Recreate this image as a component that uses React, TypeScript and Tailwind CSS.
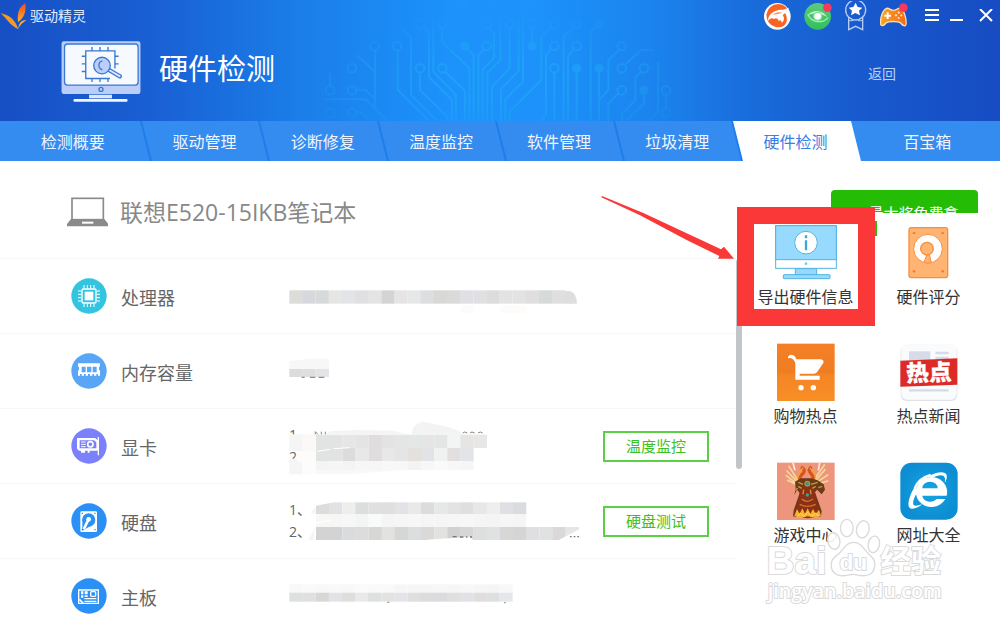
import React, { useState } from "react";
import type { ReactNode } from "react";

const tabs = ["检测概要", "驱动管理", "诊断修复", "温度监控", "软件管理", "垃圾清理", "硬件检测", "百宝箱"];

// traces and nodes of the circuit board behind the header
const traces = [
  "M293 150V270L388 363", "M305 85L333 112V285L412 363", "M370 80L387 98V232L456 300V363", "M400 45V215L468 285V363",
  "M360 218V270L442 350V363", "M426 85V125L508 205V363", "M435 215L495 272V363", "M500 145L521 165V363",
  "M555 148L535 165V363", "M570 85L582 100V175L548 208V363", "M560 5L601 45V180L562 218V363", "M629 85V205L576 260V363",
  "M629 15L656 40V212L603 268V363", "M669 0V245L616 298V363", "M696 85V130", "M752 82L724 110V240L629 335V363",
  "M752 148L738 165V345L724 363", "M763 218V363", "M820 82L791 110V363", "M820 150L804 168V363", "M830 215V363",
  "M890 80L872 95V363", "M897 215V363", "M957 150L925 180V270L900 298", "M975 195L1022 150H1060", "M955 280L925 310V363",
  "M1024 215L1006 232V300L965 342V363", "M1032 280V310L978 363", "M1074 185V335L1048 363", "M1098 285V325",
  "M225 150V320", "M170 165L225 215", "M172 271H198L225 298", "M70 298H198L262 363", "M170 338H185L210 363", "M90 220V258",
];
const rings = [
  [360, 72], [427, 72], [560, 72], [629, 72], [696, 72], [763, 72], [830, 72], [291, 138], [560, 138], [763, 138], [830, 138],
  [965, 138], [360, 205], [427, 205], [763, 205], [965, 205], [1032, 205], [156, 205], [156, 271], [965, 271], [1098, 271],
  [90, 271], [90, 338], [156, 338], [1098, 338], [224, 138], [629, 6], [696, 6], [560, 6],
];
const dots = [[494, 138], [696, 138], [830, 205], [897, 205], [1032, 271], [494, 4], [897, 72]];

function Circuit() {
  return (
    <svg className="absolute bottom-0 left-1/2 h-[121px] w-[400px] -translate-x-1/2" viewBox="0 0 1200 363" aria-hidden="true">
      <defs>
        <radialGradient id="fade" cx="0.5" cy="0.65" r="0.55">
          <stop offset="0.3" stopColor="#fff" />
          <stop offset="1" stopColor="#fff" stopOpacity="0.15" />
        </radialGradient>
        <mask id="fadeMask">
          <rect width="1200" height="363" fill="url(#fade)" />
        </mask>
      </defs>
      <g mask="url(#fadeMask)" stroke="#1fabf7" strokeWidth="6" fill="none" opacity="0.6">
        {traces.map((d) => <path key={d} d={d} />)}
        {rings.map(([x, y]) => <circle key={`${x}-${y}`} cx={x} cy={y} r="13" />)}
        {dots.map(([x, y]) => <circle key={`${x}-${y}`} cx={x} cy={y} r="11" fill="#1fabf7" />)}
      </g>
    </svg>
  );
}

function Logo() {
  return (
    <svg className="h-7 w-7" viewBox="0 8 84 84" aria-hidden="true">
      <defs>
        <linearGradient id="leaf" x1="0" y1="0" x2="0" y2="1">
          <stop offset="0" stopColor="#f04a20" />
          <stop offset="1" stopColor="#fbb32a" />
        </linearGradient>
      </defs>
      <path d="M76 12C60 20 50 40 54 68C72 58 80 34 76 12Z" fill="url(#leaf)" />
      <path d="M2 42C26 46 46 60 55 90C32 80 20 58 2 42Z" fill="#f39a2a" />
      <path d="M80 63C66 62 56 68 55 90C60 76 68 70 80 63Z" fill="#fbb32a" />
    </svg>
  );
}

function MonitorIcon() {
  return (
    <svg className="h-[61px] w-20" viewBox="183 122 240 184" fill="none" aria-hidden="true">
      <rect x="184" y="123" width="238" height="159" rx="7" fill="#bacef7" />
      <rect x="193" y="131" width="222" height="124" rx="9" fill="#f6faff" stroke="#3b78d2" strokeWidth="4" />
      <g stroke="#3b78d2" strokeWidth="4">
        <path d="M345 205V152H257V235H330" />
        <path d="M276 152V140M300 152V140M324 152V140M276 235V246M300 235V246M324 235V246M257 168H245M257 191H245M257 214H245M345 168H356M345 191H356" />
        <path d="M328 210L360 229" stroke="#3b78d2" strokeWidth="13" strokeLinecap="round" />
        <path d="M330 211L359 228" stroke="#dbe7fc" strokeWidth="6" strokeLinecap="round" />
        <circle cx="306" cy="196" r="25" fill="#bacef7" />
        <path d="M307 182A14 14 0 0 0 307 209" />
        <circle cx="303" cy="268" r="6" />
      </g>
      <rect x="267" y="284" width="69" height="11" fill="#dfe8fb" />
      <rect x="220" y="297" width="163" height="8" rx="3" fill="#f2f6ff" />
    </svg>
  );
}

function FoxIcon() {
  return (
    <svg className="h-[27px] w-[27px]" viewBox="72 8 81 81" aria-hidden="true">
      <circle cx="112" cy="48" r="40" fill="#fff" />
      <path d="M138 20A35 35 0 1 0 132 76C142 68 143 54 137 42C134 38 138 32 142 28Z" fill="#fb6325" />
      <path d="M84 62C84 48 92 38 106 32C120 26 134 30 146 22C144 36 134 38 128 44C136 54 130 66 124 68C126 60 120 58 116 62C114 54 108 52 102 56C96 52 90 54 84 62Z" fill="#fff" />
      <path d="M98 44C106 36 116 36 126 36C118 42 108 42 98 44Z" fill="#fb8a4c" />
      <path d="M120 64C116 70 106 72 98 70C106 80 124 80 132 70Z" fill="#fb6325" />
    </svg>
  );
}

function EyeIcon() {
  return (
    <svg className="h-[27px] w-7" viewBox="194 8 84 81" aria-hidden="true">
      <defs>
        <linearGradient id="eye" x1="0" y1="0" x2="0" y2="1">
          <stop offset="0" stopColor="#5bcb7c" />
          <stop offset="1" stopColor="#31c05a" />
        </linearGradient>
      </defs>
      <circle cx="235" cy="48" r="40" fill="url(#eye)" />
      <path d="M205 44C222 26 250 28 264 50C246 38 224 36 205 44Z" fill="#c9f4d0" />
      <path d="M205 42C216 66 246 72 266 52" stroke="#a8eab5" strokeWidth="4" fill="none" />
      <circle cx="235" cy="48" r="14" fill="#7fdf9a" />
      <circle cx="235" cy="48" r="10" fill="#fff" />
      <circle cx="264" cy="22" r="13" fill="#f8395c" />
    </svg>
  );
}

function BadgeIcon() {
  return (
    <svg className="h-[30px] w-[22px]" viewBox="319 0 66 90" fill="none" aria-hidden="true">
      <path d="M330 46V86L351 76L372 86V46" stroke="#b4cdf6" strokeWidth="4" />
      <path d="M330 59H344M358 59H372" stroke="#b4cdf6" strokeWidth="3" />
      <circle cx="351" cy="27" r="30" fill="#1b5bcb" stroke="#b4cdf6" strokeWidth="4" />
      <path d="M351 5L357 18L371 20L361 29L364 43L350 36L337 43L340 29L330 20L344 18Z" fill="#fff" />
    </svg>
  );
}

function GamepadIcon() {
  return (
    <svg className="h-[27px] w-7" viewBox="422 4 84 81" aria-hidden="true">
      <defs>
        <linearGradient id="pad" x1="0" y1="0" x2="1" y2="0">
          <stop offset="0" stopColor="#fba51d" />
          <stop offset="1" stopColor="#f26a1c" />
        </linearGradient>
      </defs>
      <path d="M442 20C450 18 452 26 462 26C472 26 474 18 484 20C494 24 502 52 500 68C498 76 490 72 484 64C476 58 448 58 440 64C434 72 424 76 424 66C422 50 430 24 442 20Z" fill="url(#pad)" stroke="#f8dfb9" strokeWidth="4" />
      <path d="M445 32V52M435 42H455" stroke="#fff" strokeWidth="6" />
      <path d="M478 29l4 4-4 4-4-4zM478 45l4 4-4 4-4-4zM470 37l4 4-4 4-4-4zM486 37l4 4-4 4-4-4z" fill="#ffe2c4" />
      <circle cx="492" cy="18" r="13" fill="#f8395c" />
    </svg>
  );
}

function Round({ color, children }: { color: string; children: ReactNode }) {
  return (
    <svg className="h-9 w-9 shrink-0" viewBox="-54 -54 108 108" fill="none" aria-hidden="true">
      <circle r="53" fill={color} />
      {children}
    </svg>
  );
}

const cpuIcon = (
  <Round color="#33c5e0">
    <rect x="-21" y="-21" width="42" height="42" rx="4" stroke="#fff" strokeWidth="4" />
    <rect x="-13" y="-13" width="26" height="26" fill="#fff" />
    <path d="M-15-23V-33M-5-23V-33M5-23V-33M15-23V-33M-15 23V33M-5 23V33M5 23V33M15 23V33M-23-15H-33M-23-5H-33M-23 5H-33M-23 15H-33M23-15H33M23-5H33M23 5H33M23 15H33" stroke="#fff" strokeWidth="3" />
  </Round>
);
const memoryIcon = (
  <Round color="#5aa6f6">
    <path d="M-33-23H33V-14L30-11V-2H33V14H27V9H22V14H15V9H10V14H3V9H-3V14H-10V9H-15V14H-22V9H-27V14H-33V-2H-30V-11L-33-14Z" fill="#fff" />
    <path d="M-22-13H-10V4H-22ZM-6-13H7V4H-6ZM11-13H23V4H11Z" fill="#5aa6f6" />
  </Round>
);
const gpuIcon = (
  <Round color="#7b80fb">
    <path d="M-36-24H18L26-18V-27H30V28H26V14H2V20H-4V14H-12V20H-24V14H-30L-36 8Z" fill="#fff" />
    <path d="M-28-17H15L22-11V7H-28Z" fill="#7b80fb" />
    <circle cx="4" cy="-5" r="8" stroke="#fff" strokeWidth="5" />
    <path d="M-24-12H-10M-24-5H-10M-24 2H-10" stroke="#fff" strokeWidth="3" />
  </Round>
);
const diskIcon = (
  <Round color="#2b90f6">
    <rect x="-26" y="-29" width="50" height="62" rx="4" fill="#fff" />
    <circle cx="-1" cy="-3" r="20" fill="#2b90f6" />
    <circle cx="-1" cy="-5" r="7" fill="#fff" />
    <path d="M-20 5V29L6 14Z" fill="#2b90f6" />
    <path d="M-3-2L-14 21" stroke="#fff" strokeWidth="8" strokeLinecap="round" />
    <path d="M-22-25h4v4h-4zM16-25h4v4h-4zM16 24h4v4h-4zM-22 24h4v4h-4z" fill="#2b90f6" />
  </Round>
);
const boardIcon = (
  <Round color="#2b90f6">
    <path d="M-31-18H28V22H-31Z" stroke="#fff" strokeWidth="4" />
    <path d="M-24-14h7v9h-7zM-13-14h9v9h-9zM-24-2h7v7h-7zM-13-2h9v5h-9z" fill="#fff" />
    <rect x="5" y="-13" width="15" height="14" rx="3" stroke="#fff" strokeWidth="4" />
    <path d="M-14 8H22M-14 16H22" stroke="#fff" strokeWidth="4" />
    <path d="M-29 10L-18 21" stroke="#fff" strokeWidth="5" />
  </Round>
);

// greyed out mosaic, each strip is a line of 13px cells
type Strip = { x: number; y: number; h: number; cells: string[] };

function Mosaic({ top, strips, children }: { top: number; strips: Strip[]; children?: ReactNode }) {
  return (
    <svg className="absolute left-0 top-0 h-[75px] w-[310px]" viewBox={`57 ${top} 930 225`} aria-hidden="true">
      {strips.map((s) =>
        s.cells.map((c, i) => (
          <rect key={`${s.y}-${i}`} x={s.x + Math.round(i * 39.4)} y={s.y} width="40" height={s.h} fill={c} />
        ))
      )}
      {children}
    </svg>
  );
}

const cpuStrips: Strip[] = [
  { x: 58, y: 58, h: 40, cells: ["#dcdcd8", "#d6d8de", "#d7dada", "#e6e6e4", "#e2e4e8", "#e0e0e2", "#e4e4e4", "#d4d4d4", "#e6e5e4", "#e6e8e8", "#dcdee0", "#d8d8d7", "#dadadb", "#e0e0e4", "#e0dfe1", "#dcdcdc", "#e3e3e3", "#e3e3e3", "#dfe0de", "#d7dada", "#dfdfe0"] },
  { x: 572, y: 104, h: 22, cells: ["#fdfcfb"] },
  { x: 690, y: 104, h: 22, cells: ["#fdfcfb", "#fdfcfb"] },
];
const memoryStrips: Strip[] = [
  { x: 58, y: 294, h: 24, cells: ["#dcdcdc", "#dedede", "#e2e4e8"] },
];
const gpuStrips: Strip[] = [
  { x: 58, y: 490, h: 50, cells: ["#f5f5f5", "#fbf9f8"] },
  { x: 138, y: 491, h: 40, cells: ["#e2e4e4", "#e2e3e3", "#e6e6e6", "#e4e4e4", "#dfddde", "#e3e3e3", "#e4e5e5", "#e3e7e6", "#e5e5e5", "#e4e5e5", "#f2f5f4", "#e6e5e3", "#e7e7e7"] },
  { x: 138, y: 531, h: 39, cells: ["#e2e4e4", "#e2e4e4", "#dcdcdd", "#e8e8e8", "#dfddde", "#e8e8e8", "#e4e5e5", "#e3e0dd", "#e2e3e7", "#eff2f1", "#e2dfde", "#e3e4e7"] },
  { x: 58, y: 563, h: 47, cells: ["#f5f5f5", "#fcfcfc"] },
  { x: 138, y: 570, h: 27, cells: ["#f3f4f4", "#f5f6f6", "#f4f4f4", "#f7f7f7", "#f6f6f6", "#f8f8f8", "#f6f7f7", "#f4f3f2", "#f7f7f8", "#f9fafa", "#f7f7f7", "#f6f6f7"] },
];
const diskStrips: Strip[] = [
  { x: 138, y: 64, h: 35, cells: ["#dddbdb", "#e0e2e6", "#eeeeec", "#dcdedd", "#e0e0e1", "#dedfde", "#e2e3e6", "#e9e9e9", "#dcdcdb", "#e5e8e7", "#e3e3e4", "#dedfdf", "#e7e7e7", "#efeeec", "#dee0e3", "#dadbdf"] },
  { x: 138, y: 99, h: 39, cells: ["#f7f7f6", "#f6f6f5", "#f6f7f6", "#f3f4f4", "#f9fbfa", "#f5f5f5", "#f6f6f6", "#f7f7f8", "#f5f5f5", "#f5f5f5", "#f6f6f7", "#f7f7f7", "#f5f5f5", "#f4f4f4", "#f6f6f6", "#f5f5f5"] },
  { x: 138, y: 138, h: 39, cells: ["#d3d3d3", "#d3d3d3", "#dadbdd", "#dcdcdc", "#d7d7d6", "#e2e2e1", "#d4d7d6", "#dcdddf", "#dad9d8", "#e2e2e0", "#d2d1d1", "#d6d6d8", "#dddfdf", "#e0e1e2", "#d8d7d6", "#d6d5d5", "#dfdfe2", "#e0e1e1", "#dbd9d8", "#e4e6e8"] },
];
const boardStrips: Strip[] = [
  { x: 58, y: 310, h: 25, cells: ["#f8f8f8", "#f9f9f9", "#f8f8f8", "#f9f9f9", "#f8f8f8", "#fafafa", "#f9f9f9", "#f9f9f9", "#f5f6f6", "#f6f6f6", "#f6f6f6", "#f7f7f7", "#f5f6f6", "#f8f8f8", "#f6f6f7", "#f4f6f6", "#f8f8f8"] },
  { x: 58, y: 335, h: 27, cells: ["#dedfdf", "#dfe1e0", "#d9d7d6", "#e2e3e6", "#dfdedc", "#e8eae9", "#dfe1e1", "#e5e3e1", "#e2e4e7", "#dfdfdf", "#dddcdb", "#dadbdf", "#e0dfdf", "#e0e2e5", "#dfdedd", "#dedfe0", "#e5e7ea"] },
];

type Row = { name: string; icon: ReactNode; lines?: string[]; action?: string; mosaic: ReactNode };

const rows: Row[] = [
  {
    name: "处理器",
    icon: cpuIcon,
    mosaic: (
      <Mosaic top={-36} strips={cpuStrips}>
        <path d="M885 60H900Q920 66 921 98H885Z" fill="#dedede" />
      </Mosaic>
    ),
  },
  {
    name: "内存容量",
    icon: memoryIcon,
    mosaic: (
      <Mosaic top={189} strips={memoryStrips}>
        <path d="M58 270L120 263H177V294H58Z" fill="#f7f7f7" />
        <path d="M95 319H104M120 319H136M146 319H163" stroke="#8d8d8d" strokeWidth="4" />
      </Mosaic>
    ),
  },
  {
    name: "显卡",
    icon: gpuIcon,
    lines: ["1、", "2、"],
    action: "温度监控",
    mosaic: (
      <Mosaic top={414} strips={gpuStrips}>
        <path d="M82 540H137V572H82Z" fill="#fdfcfb" />
        <path d="M180 481L260 477L370 479L415 491H165Z" fill="#f4f4f4" />
        <path d="M424 491Q430 455 460 452L535 468L572 482V491Z" fill="#f3f3f3" />
        <path d="M138 597H400L240 609H138Z" fill="#f8f8f8" />
        <path d="M136 490V482L144 490M154 482V490M166 482V490M578 486L584 483L592 486M600 486L606 483L614 486M624 486L631 483L638 486" stroke="#888" strokeWidth="3" fill="none" />
        <path d="M142 541L180 535M190 533L240 530" stroke="#fff" strokeWidth="3" />
      </Mosaic>
    ),
  },
  {
    name: "硬盘",
    icon: diskIcon,
    lines: ["1、", "2、"],
    action: "硬盘测试",
    mosaic: (
      <Mosaic top={9} strips={diskStrips}>
        <path d="M136 98L122 97L136 76ZM130 177H115L136 140Z" fill="#f4f4f4" />
        <path d="M138 62H200L138 74Z" fill="#fff" />
        <path d="M470 179V176L600 167L612 179ZM862 179L928 145V179Z" fill="#fff" />
        <path d="M548 167H560M570 168H580M588 168H592M600 168H606M900 167H905M911 167H916M922 167H927" stroke="#777" strokeWidth="4" />
        <path d="M138 126Q160 122 182 119" stroke="#fff" strokeWidth="4" fill="none" />
      </Mosaic>
    ),
  },
  {
    name: "主板",
    icon: boardIcon,
    mosaic: (
      <Mosaic top={234} strips={boardStrips}>
        <path d="M352 364H358M702 365H707" stroke="#999" strokeWidth="4" />
      </Mosaic>
    ),
  },
];

const exportIcon = (
  <svg className="h-14 w-[62px]" viewBox="135 132 186 168" fill="none" aria-hidden="true">
    <path d="M196 266H260V285H196Z" fill="#97d8fd" stroke="#52b2e3" strokeWidth="3" />
    <rect x="137" y="137" width="182" height="128" fill="#fff" stroke="#52b2e3" strokeWidth="3" />
    <path d="M137 137H319V239H137Z" fill="#97dafe" stroke="#52b2e3" strokeWidth="3" />
    <rect x="160" y="284" width="140" height="12" rx="2" fill="#97d8fd" stroke="#52b2e3" strokeWidth="3" />
    <circle cx="228" cy="188" r="34" fill="#fff" stroke="#52b2e3" strokeWidth="3" />
    <path d="M228 166V175M228 181V211" stroke="#3ba5dc" strokeWidth="7" />
    <circle cx="228" cy="251" r="4" fill="#7cc6ed" />
  </svg>
);
const scoreIcon = (
  <svg className="h-14 w-[57px]" viewBox="512 132 171 168" fill="none" aria-hidden="true">
    <rect x="539" y="143" width="116" height="150" rx="7" fill="#ffb474" stroke="#fb8d37" strokeWidth="4" />
    <circle cx="596" cy="206" r="43" fill="#fff" stroke="#fb8d37" strokeWidth="3" />
    <path d="M594 222L584 246Q595 252 606 248L600 222Z" fill="#ffb474" stroke="#fb8d37" strokeWidth="3" />
    <circle cx="593" cy="206" r="19" fill="#ffb474" stroke="#fb8d37" strokeWidth="4" />
    <g fill="#fb7c24">
      <circle cx="554" cy="159" r="4" />
      <circle cx="640" cy="159" r="4" />
      <circle cx="554" cy="274" r="4" />
      <circle cx="640" cy="274" r="4" />
    </g>
  </svg>
);
const cartIcon = (
  <svg className="h-[58px] w-[58px]" viewBox="112 38 174 174" aria-hidden="true">
    <defs>
      <linearGradient id="cart" x1="0" y1="0" x2="0" y2="1">
        <stop offset="0" stopColor="#f47f27" />
        <stop offset="0.5" stopColor="#f07d22" />
        <stop offset="0.55" stopColor="#f48524" />
        <stop offset="1" stopColor="#f88f26" />
      </linearGradient>
    </defs>
    <rect x="112" y="40" width="173" height="172" fill="url(#cart)" />
    <path d="M145 80Q148 72 156 73Q166 74 170 87H243Q254 89 251 98L232 126Q229 130 222 130H180V136H240V148H167V98Q160 80 145 84Z" fill="#fff" />
    <circle cx="184" cy="172" r="8" fill="#fff" />
    <circle cx="221" cy="172" r="8" fill="#fff" />
  </svg>
);
const newsIcon = (
  <svg className="h-[58px] w-[58px]" viewBox="480 38 174 174" aria-hidden="true">
    <rect x="482" y="44" width="170" height="168" rx="18" fill="#dfe2e8" />
    <rect x="484" y="40" width="166" height="168" rx="18" fill="#fafbfd" />
    <path d="M507 63H571V90H507Z" fill="#d5dbe7" />
    <path d="M586 68H626M586 83H626M507 180H626" stroke="#d5dbe7" strokeWidth="7" />
    <path d="M481 91L652 84V163L481 169Z" fill="#dc2a27" />
    <text x="567" y="151" textAnchor="middle" fontSize="68" fontWeight="900" fill="#fff" stroke="#fff" strokeWidth="1" fontFamily="'Noto Sans CJK SC', sans-serif" transform="rotate(-2 567 128)">热点</text>
  </svg>
);
const gameIcon = (
  <svg className="h-[58px] w-[58px]" viewBox="112 67 174 174" fill="none" aria-hidden="true">
    <rect x="112" y="69" width="173" height="172" fill="#ee957d" />
    <path d="M170 124L142 94M168 130L140 108M168 134L144 122M172 118L148 80M228 122L256 90M230 128L264 106M230 134L264 124M226 116L254 76" stroke="#f3d999" strokeWidth="5" strokeLinecap="round" />
    <path d="M160 70L166 92M240 70L236 92" stroke="#fbeedb" strokeWidth="5" />
    <path d="M184 82Q200 92 190 102Q176 112 182 124M216 82Q202 90 214 102Q226 112 216 124" stroke="#d8541b" strokeWidth="10" />
    <path d="M190 84Q178 98 174 116M210 84Q226 98 228 116" stroke="#f4a62b" strokeWidth="4" />
    <path d="M166 126L184 116H216L234 122L252 134L256 150L246 164L232 150L226 158L246 214L244 230L204 236L160 230L162 212L180 160L172 150L164 166L168 146Z" fill="#6b3a18" />
    <path d="M184 140H222L238 218L226 230L202 224L180 230L168 220Z" fill="#8c2f16" />
    <path d="M164 228L172 208L180 222L188 206L196 222L204 206L212 222L220 208L228 222L238 210L244 228L226 234L204 230L182 236Z" fill="#f6b02c" />
    <path d="M174 230L182 220L192 230L204 218L216 230L228 220L236 230" stroke="#fbe36a" strokeWidth="3" />
    <path d="M186 178Q202 192 220 178M180 194Q202 206 228 194" stroke="#c97a2c" strokeWidth="4" />
    <path d="M176 128L190 134M214 134L234 128M236 144L248 140M176 140L186 146M218 146L228 140M192 150L190 164M212 150L214 164M166 152L174 146" stroke="#c39a44" strokeWidth="4" />
    <circle cx="203" cy="132" r="7" fill="#2c9b91" stroke="#c9862e" strokeWidth="4" />
    <circle cx="203" cy="166" r="5" fill="#38a18f" />
  </svg>
);
const webIcon = (
  <svg className="h-[58px] w-[58px]" viewBox="480 67 174 174" fill="none" aria-hidden="true">
    <defs>
      <radialGradient id="web">
        <stop offset="0" stopColor="#15a5e6" />
        <stop offset="1" stopColor="#0d8ed2" />
      </radialGradient>
    </defs>
    <rect x="481" y="69" width="172" height="171" rx="34" fill="url(#web)" />
    <path d="M620 168H547A24 20 0 0 0 590 178H616A47 45 0 1 1 620 168ZM547 146H593A23 20 0 0 0 547 146Z" fill="#fff" fillRule="evenodd" />
    <path d="M528 136C506 168 498 204 514 207C524 209 538 202 546 194C534 198 524 200 521 196C516 188 524 172 532 158Z" fill="#fff" />
    <path d="M566 110C592 94 616 94 620 106C622 114 618 124 614 130C616 120 616 112 610 108C602 104 590 108 578 114Z" fill="#fff" />
    <path d="M524 146C532 126 550 112 572 106" stroke="#fff" strokeWidth="7" />
  </svg>
);

const tools = [
  { name: "导出硬件信息", icon: exportIcon, marked: true },
  { name: "硬件评分", icon: scoreIcon },
  { name: "购物热点", icon: cartIcon },
  { name: "热点新闻", icon: newsIcon },
  { name: "游戏中心", icon: gameIcon },
  { name: "网址大全", icon: webIcon },
];

function Watermark() {
  return (
    <svg className="pointer-events-none absolute left-[27px] top-[356px] h-[90px] w-[187px]" viewBox="70 230 560 270" aria-hidden="true">
      <g fill="#fff" fillOpacity="0.9" stroke="#dadada" strokeWidth="4">
        <ellipse cx="321" cy="263" rx="19" ry="26" />
        <ellipse cx="369" cy="267" rx="19" ry="26" transform="rotate(12 369 267)" />
        <ellipse cx="282" cy="302" rx="18" ry="25" transform="rotate(-12 282 302)" />
        <ellipse cx="402" cy="312" rx="17" ry="25" transform="rotate(12 402 312)" />
        <path d="M342 306C366 306 374 332 392 346C412 362 410 402 376 406C358 408 354 402 340 402C326 402 318 408 302 406C268 400 266 362 290 346C310 332 316 306 342 306Z" />
      </g>
      <g fill="#fff" stroke="#dadada" strokeWidth="6" paintOrder="stroke" fontFamily="'Liberation Sans', 'Noto Sans CJK SC', sans-serif" fontWeight="700">
        <text x="80" y="401" fontSize="116">Bai</text>
        <text x="299" y="390" fontSize="68">du</text>
        <text x="422" y="396" fontSize="91" fontFamily="'Noto Sans CJK SC', sans-serif">经验</text>
      </g>
      <text x="84" y="472" fontSize="59" fill="#fff" stroke="#dadada" strokeWidth="6" paintOrder="stroke" fontFamily="'Open Sans', sans-serif" fontWeight="600">jingyan.baidu.com</text>
    </svg>
  );
}

export default function App() {
  const [active, setActive] = useState("硬件检测");

  return (
    <div className="flex h-screen flex-col overflow-hidden bg-white font-['Open_Sans','Noto_Sans_CJK_SC',sans-serif] text-[#666]">
      <header className="relative shrink-0 bg-[linear-gradient(90deg,#174fc5_0%,#195fd3_15%,#1b7ee9_30%,#1c92fb_45%,#1c92fa_54%,#1b84ee_65%,#196cdb_75%,#1858cd_87%,#174cc3_100%)] text-white">
        <Circuit />
        <div className="relative flex h-8 items-center justify-between">
          <div className="flex items-center gap-[2px]">
            <Logo />
            <span className="text-[14px] leading-5 text-[#e4edfc]">驱动精灵</span>
          </div>
          <div className="flex items-center pr-[3px]">
            <div className="flex items-center gap-[13px]">
              <button aria-label="浏览器"><FoxIcon /></button>
              <button aria-label="护眼"><EyeIcon /></button>
              <button aria-label="勋章"><BadgeIcon /></button>
              <button aria-label="游戏"><GamepadIcon /></button>
            </div>
            <div className="ml-[17px] flex items-center gap-[11px]">
              <button aria-label="菜单">
                <svg className="h-[14px] w-[14px]" viewBox="0 0 14 14" stroke="#fff" strokeWidth="2"><path d="M0 1H14M0 6H14M0 11H14" /></svg>
              </button>
              <button aria-label="最小化">
                <svg className="h-[14px] w-[14px]" viewBox="0 0 14 14" stroke="#fff" strokeWidth="2"><path d="M0 11H13" /></svg>
              </button>
              <button aria-label="关闭" className="flex w-[22px] justify-center">
                <svg className="h-[14px] w-[14px]" viewBox="0 0 14 14" stroke="#fff" strokeWidth="2"><path d="M1 0L13 12M13 0L1 12" /></svg>
              </button>
            </div>
          </div>
        </div>
        <div className="relative flex h-[89px] items-center pb-[10px] pl-[61px] pr-[104px]">
          <MonitorIcon />
          <h1 className="ml-[18px] flex-1 pb-[6px] text-[29px] leading-10">硬件检测</h1>
          <a href="#" className="pt-1 text-[14px] leading-5 text-[#b9d0f6]">返回</a>
        </div>
      </header>

      <nav className="flex h-10 shrink-0 overflow-hidden bg-[#348bf0] text-[16px] text-white">
        {tabs.map((tab, i) => {
          const edge = i === 0 || i === tabs.length - 1;
          const on = tab === active;
          return (
            <button key={tab} onClick={() => setActive(tab)} className={`relative pt-[2px] ${edge ? "grow-[145]" : "grow-[118]"} basis-0`}>
              {(on || i < tabs.length - 1) && (
                <span className={`absolute inset-y-0 -right-[2px] left-[2px] skew-x-[14deg] ${on ? "bg-white" : "border-r-2 border-[#1f7dea]"}`} />
              )}
              <span className={`relative leading-6 ${on ? "text-[#3b7de2]" : "text-[#f0f6ff]"}`}>{tab}</span>
            </button>
          );
        })}
      </nav>

      <div className="flex min-h-0 flex-1">
        <main className="min-w-0 flex-1">
          <div className="flex h-[98px] items-center border-b border-[#f8f8f8] pl-[67px] pt-[5px]">
            <svg className="h-[30px] w-[41px]" viewBox="52 55 123 90" fill="none" aria-hidden="true">
              <rect x="67" y="59" width="94" height="64" stroke="#8a8a8a" strokeWidth="5" />
              <path d="M64 121H164L176 136V143H52V136Z" fill="#8a8a8a" />
              <path d="M97 132H131" stroke="#fff" strokeWidth="6" />
            </svg>
            <h2 className="ml-3 text-[23px] leading-8 text-[#888]">联想E520-15IKB笔记本</h2>
          </div>
          {rows.map((row) => (
            <section key={row.name} className="flex h-[75px] items-center border-b border-[#f8f8f8] pl-[71px]">
              {row.icon}
              <h3 className="ml-[14px] w-[168px] pt-1 text-[18px] leading-6">{row.name}</h3>
              <div className="relative flex h-[75px] flex-1 flex-col justify-center text-[14px] leading-[22px]">
                {row.lines?.map((line) => <p key={line}>{line}</p>)}
                {row.mosaic}
              </div>
              {row.action && (
                <button className="mr-[27px] h-[31px] w-[106px] border-2 border-[#5bd044] text-[15px] leading-5 text-[#3cc022]">{row.action}</button>
              )}
            </section>
          ))}
        </main>

        <aside className="relative flex w-[264px] shrink-0">
          <div className="mt-[98px] h-[210px] w-[6px] rounded-full bg-[#c2c6ca]" />
          <div className="flex flex-1 flex-col pl-[2px] pr-[10px] pt-[29px]">
            <div className="mr-3 h-[23px] w-[147px] self-end overflow-hidden rounded-t">
              <button className="h-[46px] w-full bg-[#25bc06] pl-[18px] text-[15px] text-white">最大奖免费拿</button>
            </div>
            <div className="mt-[11px] grid grid-cols-2 gap-y-[34px]">
              {tools.map((tool) => (
                <button key={tool.name} className="relative flex flex-col items-center">
                  {tool.marked && (
                    <>
                      <span className="absolute -top-[17px] left-1/2 h-[119px] w-[138px] -translate-x-1/2 border-[17px] border-[#fb3838]" />
                      <span className="absolute -right-[10px] -top-[3px] h-[15px] w-[2px] bg-[#25bc06]" />
                    </>
                  )}
                  <span className="flex h-[58px] items-start">{tool.icon}</span>
                  <span className="mt-[3px] whitespace-nowrap text-[16px] leading-6 text-[#333]">{tool.name}</span>
                </button>
              ))}
            </div>
          </div>
          <svg className="pointer-events-none absolute -left-[135px] top-[35px] h-16 w-[134px]" viewBox="33 48 402 192" aria-hidden="true">
            <path d="M36 48L160 99L393 208L402 200L432 236H384L388 228L290 180L150 106L34 52Z" fill="#fb3838" />
          </svg>
          <Watermark />
        </aside>
      </div>
    </div>
  );
}
